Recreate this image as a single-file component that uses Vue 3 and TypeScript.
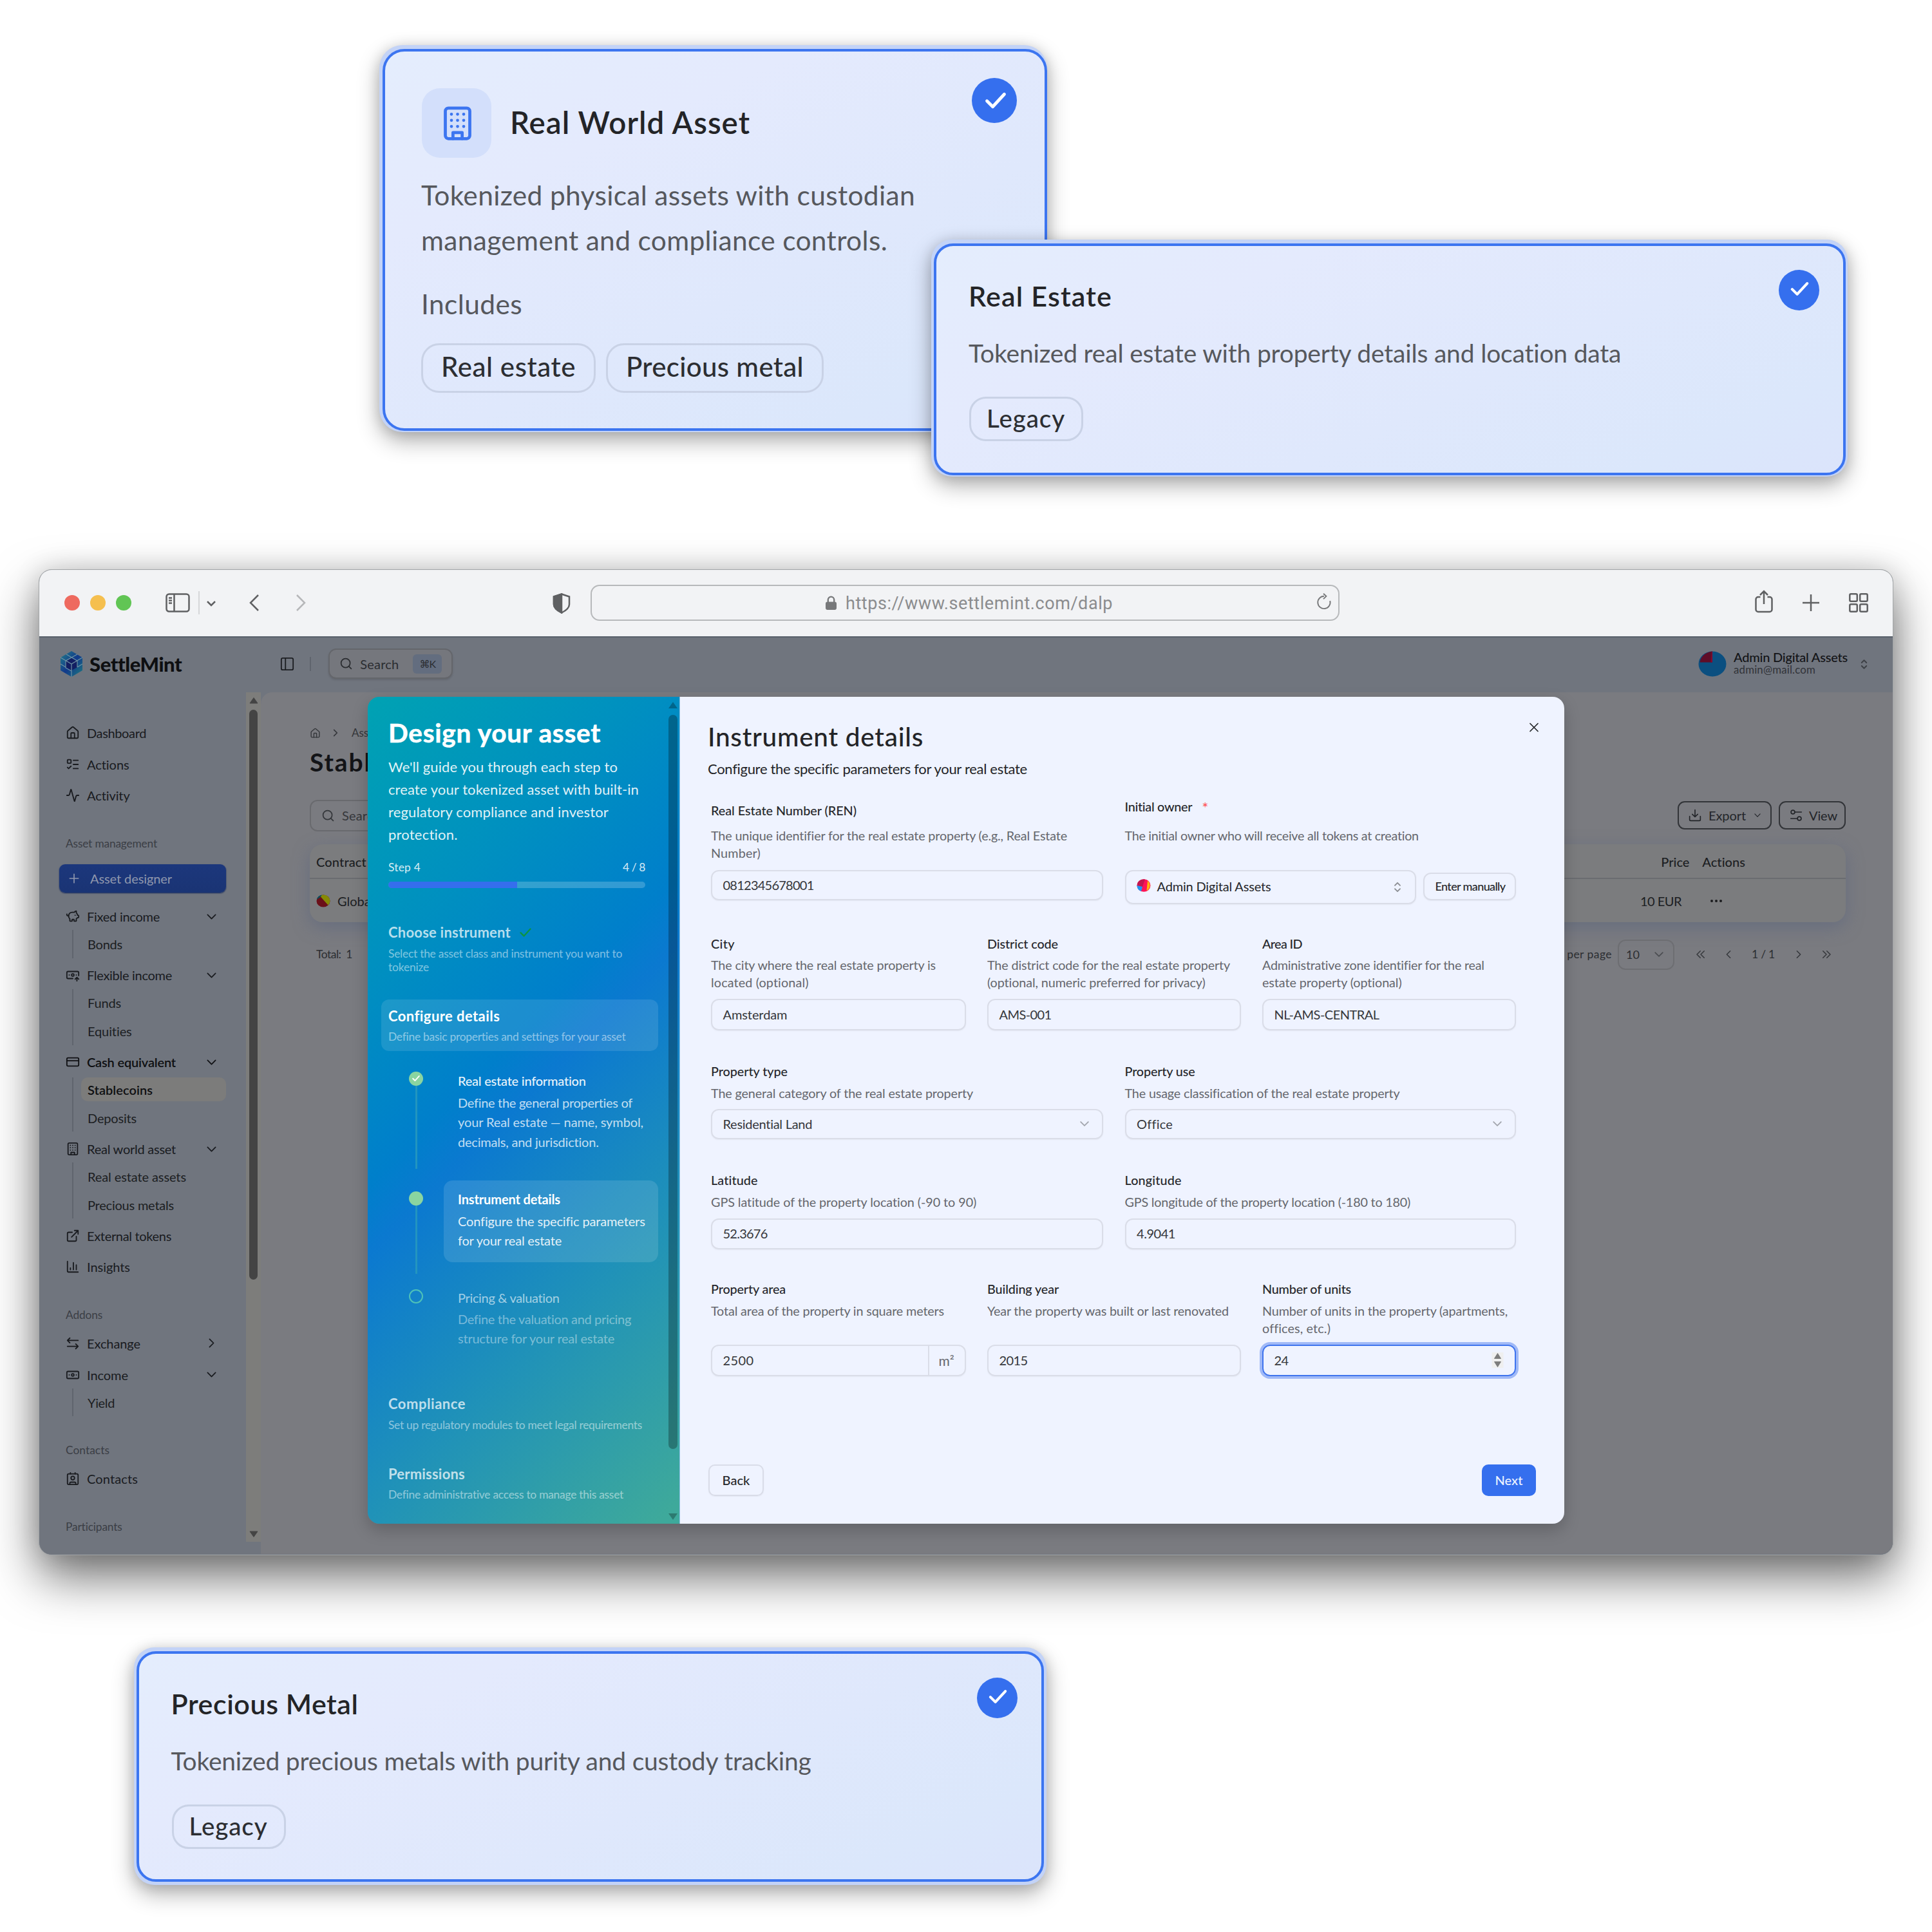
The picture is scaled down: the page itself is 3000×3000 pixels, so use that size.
<script setup lang="ts">
import type { Directive } from 'vue'

/* Tracks a line of text so that it fills the given width. */
const vFit: Directive<HTMLElement, number | undefined> = {
  mounted(el, { value }) {
    if (!value) return
    const n = (el.textContent ?? '').length
    const w = el.getBoundingClientRect().width
    el.style.letterSpacing = `${((value + 2 - w) / n).toFixed(3)}px`
  },
}

const icons: Record<string, string> = {
  home: '<path d="M15 21v-8a1 1 0 0 0-1-1h-4a1 1 0 0 0-1 1v8"/><path d="M3 10a2 2 0 0 1 .709-1.528l7-6a2 2 0 0 1 2.582 0l7 6A2 2 0 0 1 21 10v9a2 2 0 0 1-2 2H5a2 2 0 0 1-2-2z"/>',
  todo: '<rect x="3" y="4" width="6" height="6" rx="1"/><path d="m3 17 2 2 4-4M13 5h8M13 12h8M13 19h8"/>',
  activity: '<path d="M22 12h-2.480a2 2 0 0 0-1.930 1.460l-2.350 8.360a.25.25 0 0 1-.48 0L9.240 2.180a.25.25 0 0 0-.48 0l-2.350 8.360A2 2 0 0 1 4.490 12H2"/>',
  piggy: '<path d="M11 17h3v2a1 1 0 0 0 1 1h2a1 1 0 0 0 1-1v-3a3.160 3.160 0 0 0 2-2h1a1 1 0 0 0 1-1v-2a1 1 0 0 0-1-1h-1a5 5 0 0 0-2-4V3a4 4 0 0 0-3.200 1.600l-.3.4H11a6 6 0 0 0-6 6v1a5 5 0 0 0 2 4v3a1 1 0 0 0 1 1h2a1 1 0 0 0 1-1z"/><path d="M16 10h.01M2 8v1a2 2 0 0 0 2 2h1"/>',
  noteUp: '<path d="M12 18H4a2 2 0 0 1-2-2V8a2 2 0 0 1 2-2h16a2 2 0 0 1 2 2v5M18 12h.01M19 22v-6M22 19l-3-3-3 3M6 12h.01"/><circle cx="12" cy="12" r="2"/>',
  card: '<rect x="2" y="5" width="20" height="14" rx="2"/><path d="M2 10h20"/>',
  building: '<rect x="4" y="2" width="16" height="20" rx="2"/><path d="M9 22v-4h6v4M8 6h.01M16 6h.01M12 6h.01M12 10h.01M12 14h.01M16 10h.01M16 14h.01M8 10h.01M8 14h.01"/>',
  external: '<path d="M15 3h6v6M10 14 21 3M18 13v6a2 2 0 0 1-2 2H5a2 2 0 0 1-2-2V8a2 2 0 0 1 2-2h6"/>',
  chart: '<path d="M3 3v16a2 2 0 0 0 2 2h16M18 17V9M13 17V5M8 17v-3"/>',
  swap: '<path d="M7 3 3 7l4 4M3 7h18M17 21l4-4-4-4M21 17H3"/>',
  note: '<rect x="2" y="6" width="20" height="12" rx="2"/><circle cx="12" cy="12" r="2"/><path d="M6 12h.01M18 12h.01"/>',
  contact: '<path d="M16 2v2M7 22v-2a2 2 0 0 1 2-2h6a2 2 0 0 1 2 2v2M8 2v2"/><circle cx="12" cy="11" r="3"/><rect x="3" y="4" width="18" height="18" rx="2"/>',
  down: '<path d="m5 8.500 7 7 7-7"/>',
  right: '<path d="m8.500 5 7 7-7 7"/>',
  left: '<path d="m15.500 5-7 7 7 7"/>',
  dright: '<path d="m5 5 7 7-7 7M13 5l7 7-7 7"/>',
  dleft: '<path d="m19 5-7 7 7 7M11 5l-7 7 7 7"/>',
  updown: '<path d="m6 16 6 6 6-6M6 8l6-6 6 6"/>',
  search: '<circle cx="11" cy="11" r="8"/><path d="m21 21-4.300-4.300"/>',
  panel: '<rect x="2" y="2" width="20" height="20" rx="2.500"/><path d="M9 2v20"/>',
  plus: '<path d="M4 12h16M12 4v16"/>',
  download: '<path d="M12 2v13M7 10l5 5 5-5M2 14v6a2 2 0 0 0 2 2h16a2 2 0 0 0 2-2v-6"/>',
  sliders: '<circle cx="6" cy="6" r="3.500"/><circle cx="18" cy="18" r="3.500"/><path d="M10 6h12M2 18h12"/>',
  close: '<path d="M3 3l18 18M21 3 3 21"/>',
  check: '<path d="m3 12.500 6 6L21 5.500"/>',
}

interface Sub { text: string; w: number; on?: boolean }
interface Item { icon: string; text: string; w: number; bold?: boolean; chev?: string; subs?: Sub[] }
interface Group { title?: string; w?: number; designer?: boolean; items: Item[] }

const groups: Group[] = [
  {
    items: [
      { icon: 'home', text: 'Dashboard', w: 90 },
      { icon: 'todo', text: 'Actions', w: 64 },
      { icon: 'activity', text: 'Activity', w: 65 },
    ],
  },
  {
    title: 'Asset management', w: 140, designer: true,
    items: [
      { icon: 'piggy', text: 'Fixed income', w: 111, chev: 'down', subs: [{ text: 'Bonds', w: 52 }] },
      { icon: 'noteUp', text: 'Flexible income', w: 130, chev: 'down', subs: [{ text: 'Funds', w: 50 }, { text: 'Equities', w: 67 }] },
      { icon: 'card', text: 'Cash equivalent', w: 136, bold: true, chev: 'down', subs: [{ text: 'Stablecoins', w: 99, on: true }, { text: 'Deposits', w: 74 }] },
      { icon: 'building', text: 'Real world asset', w: 136, chev: 'down', subs: [{ text: 'Real estate assets', w: 151 }, { text: 'Precious metals', w: 132 }] },
      { icon: 'external', text: 'External tokens', w: 129 },
      { icon: 'chart', text: 'Insights', w: 65 },
    ],
  },
  {
    title: 'Addons', w: 55,
    items: [
      { icon: 'swap', text: 'Exchange', w: 81, chev: 'right' },
      { icon: 'note', text: 'Income', w: 62, chev: 'down', subs: [{ text: 'Yield', w: 40 }] },
    ],
  },
  { title: 'Contacts', w: 66, items: [{ icon: 'contact', text: 'Contacts', w: 77 }] },
  { title: 'Participants', w: 86, items: [] },
]

type Line = [string, number]
interface Field {
  label: Line; desc: Line[]; value: Line
  kind?: 'select' | 'owner' | 'area' | 'number'
}
const rows: { cls: string; fields: Field[] }[] = [
  {
    cls: 'two r1',
    fields: [
      { label: ['Real Estate Number (REN)', 224], desc: [['The unique identifier for the real estate property (e.g., Real Estate', 551], ['Number)', 75]], value: ['0812345678001', 139] },
      { label: ['Initial owner', 103], desc: [['The initial owner who will receive all tokens at creation', 455]], value: ['Admin Digital Assets', 175], kind: 'owner' },
    ],
  },
  {
    cls: 'three r2',
    fields: [
      { label: ['City', 35], desc: [['The city where the real estate property is', 347], ['located (optional)', 150]], value: ['Amsterdam', 98] },
      { label: ['District code', 108], desc: [['The district code for the real estate property', 375], ['(optional, numeric preferred for privacy)', 337]], value: ['AMS-001', 79] },
      { label: ['Area ID', 60], desc: [['Administrative zone identifier for the real', 343], ['estate property (optional)', 215]], value: ['NL-AMS-CENTRAL', 161] },
    ],
  },
  {
    cls: 'two r3',
    fields: [
      { label: ['Property type', 117], desc: [['The general category of the real estate property', 405]], value: ['Residential Land', 137], kind: 'select' },
      { label: ['Property use', 107], desc: [['The usage classification of the real estate property', 425]], value: ['Office', 53], kind: 'select' },
    ],
  },
  {
    cls: 'two r4',
    fields: [
      { label: ['Latitude', 71], desc: [['GPS latitude of the property location (-90 to 90)', 411]], value: ['52.3676', 67] },
      { label: ['Longitude', 86], desc: [['GPS longitude of the property location (-180 to 180)', 442]], value: ['4.9041', 58] },
    ],
  },
  {
    cls: 'three r5',
    fields: [
      { label: ['Property area', 114], desc: [['Total area of the property in square meters', 360]], value: ['2500', 46], kind: 'area' },
      { label: ['Building year', 109], desc: [['Year the property was built or last renovated', 373]], value: ['2015', 42] },
      { label: ['Number of units', 136], desc: [['Number of units in the property (apartments,', 379], ['offices, etc.)', 103]], value: ['24', 20], kind: 'number' },
    ],
  },
]

const steps: { state: string; title: Line; desc: Line[] }[] = [
  { state: 'done', title: ['Real estate information', 197], desc: [['Define the general properties of', 269], ['your Real estate — name, symbol,', 286], ['decimals, and jurisdiction.', 217]] },
  { state: 'now', title: ['Instrument details', 157], desc: [['Configure the specific parameters', 288], ['for your real estate', 159]] },
  { state: 'next', title: ['Pricing & valuation', 156], desc: [['Define the valuation and pricing', 267], ['structure for your real estate', 241]] },
]
</script>

<template>
  <div class="canvas">
    <!-- asset class card -->
    <div class="halo rwa">
      <div class="card">
        <div class="head">
          <div class="tile"><svg viewBox="0 0 24 24" class="ic" v-html="icons.building" /></div>
          <span v-fit="371" class="t h1">Real World Asset</span>
        </div>
        <span class="badge"><svg viewBox="0 0 24 24" class="ic" v-html="icons.check" /></span>
        <div class="para">
          <span v-fit="765" class="t">Tokenized physical assets with custodian</span>
          <span v-fit="722" class="t">management and compliance controls.</span>
        </div>
        <span v-fit="155" class="t inc">Includes</span>
        <div class="tags">
          <span class="tag"><span v-fit="207" class="t">Real estate</span></span>
          <span class="tag"><span v-fit="274" class="t">Precious metal</span></span>
        </div>
      </div>
    </div>

    <!-- browser window -->
    <div class="window">
      <div class="chrome">
        <i class="light red" /><i class="light yellow" /><i class="light green" />
        <svg class="c-side" viewBox="0 0 38 30"><rect x="1.500" y="1.500" width="35" height="27" rx="4" /><path d="M13.500 1.500v27M5 7.500h5M5 11.500h5M5 15.500h5" /></svg>
        <i class="c-div" />
        <svg class="c-chev" viewBox="0 0 16 10"><path d="M2 2l6 6 6-6" /></svg>
        <svg class="c-back" viewBox="0 0 17 28"><path d="M15 2 3 14l12 12" /></svg>
        <svg class="c-fwd" viewBox="0 0 17 28"><path d="m2 2 12 12L2 26" /></svg>
        <svg class="c-shield" viewBox="0 0 28 32"><path d="M14 1.500 26 5.500v12c0 6-6 10-12 13C8 27.500 2 23.500 2 17.500v-12z" /><path class="fill" d="M14 1.500 2 5.500v12c0 6 6 10 12 13z" /></svg>
        <div class="url">
          <svg class="lock" viewBox="0 0 18 24"><rect x="0" y="10" width="18" height="13" rx="3" /><path d="M4 11V6.500a5 5 0 0 1 10 0V11" /></svg>
          <span v-fit="413" class="t">https://www.settlemint.com/dalp</span>
          <svg class="reload" viewBox="0 0 24 28"><path d="M12 5a10 10 0 1 0 9.600 7.500M11 .800 15.500 5 11 9.500" /></svg>
        </div>
        <svg class="c-share" viewBox="0 0 28 36"><path d="M8.500 11H5a3.500 3.500 0 0 0-3.500 3.500v16A3.500 3.500 0 0 0 5 34h18a3.500 3.500 0 0 0 3.500-3.500v-16A3.500 3.500 0 0 0 23 11h-3.500M14 22V2M8 8l6-6 6 6" /></svg>
        <svg class="c-plus" viewBox="0 0 26 26"><path d="M13 0v26M0 13h26" /></svg>
        <svg class="c-grid" viewBox="0 0 30 30"><rect x="1.300" y="1.300" width="11.500" height="11.500" rx="2" /><rect x="17.200" y="1.300" width="11.500" height="11.500" rx="2" /><rect x="1.300" y="17.200" width="11.500" height="11.500" rx="2" /><rect x="17.200" y="17.200" width="11.500" height="11.500" rx="2" /></svg>
      </div>

      <div class="app">
        <div class="topbar">
          <svg class="logo" viewBox="0 0 36 42">
            <defs><linearGradient id="lg" x1="0" y1="0" x2="1" y2="1"><stop offset="0" stop-color="#23808a" /><stop offset=".5" stop-color="#12398a" /><stop offset="1" stop-color="#1d7c80" /></linearGradient></defs>
            <path d="M18 1 35 11v20L18 41 1 31V11z" fill="url(#lg)" />
            <path d="M18 12 27 17v9l-9 5-9-5v-9z" fill="#131f63" />
            <path d="M1 11l17 10L35 11M18 21v20M10 6l17 10v10M9 16v11l9 5M27 6 9 16M1 21l8 5M35 21l-8 5" fill="none" stroke="#6f93a3" stroke-width="1.200" />
          </svg>
          <span v-fit="140" class="t brand">SettleMint</span>
          <svg viewBox="0 0 24 24" class="ic tb-panel" v-html="icons.panel" />
          <i class="tb-sep" />
          <div class="tb-search">
            <svg viewBox="0 0 24 24" class="ic s19" v-html="icons.search" />
            <span v-fit="58" class="t">Search</span>
            <span class="kbd">⌘K</span>
          </div>
          <div class="user">
            <svg class="avatar" viewBox="0 0 44 42"><ellipse cx="22" cy="21" rx="21.500" ry="19.500" fill="#0b4f80" /><path d="M22 1.500A21.500 19.500 0 0 0 2.500 18.500H22z" fill="#5f0d28" /><path d="M22 1.500v17h-2.500l1.500-17z" fill="#85092f" /></svg>
            <div>
              <span v-fit="175" class="t name">Admin Digital Assets</span>
              <span v-fit="125" class="t mail">admin@mail.com</span>
            </div>
            <svg viewBox="0 0 24 24" class="ic ud" v-html="icons.updown" />
          </div>
        </div>

        <div class="body">
          <nav class="side">
            <template v-for="(g, gi) in groups" :key="gi">
              <div v-if="g.title" class="sec"><span v-fit="g.w" class="t">{{ g.title }}</span></div>
              <div v-if="g.designer" class="designer">
                <svg viewBox="0 0 24 24" class="ic" v-html="icons.plus" />
                <span v-fit="125" class="t">Asset designer</span>
              </div>
              <div class="items">
                <div v-for="it in g.items" :key="it.text" class="entry">
                  <div class="item" :class="{ bold: it.bold }">
                    <svg viewBox="0 0 24 24" class="ic lead" v-html="icons[it.icon]" />
                    <span v-fit="it.w" class="t">{{ it.text }}</span>
                    <svg v-if="it.chev" viewBox="0 0 24 24" class="ic chev" v-html="icons[it.chev]" />
                  </div>
                  <div v-if="it.subs" class="subs">
                    <div v-for="s in it.subs" :key="s.text" class="sub" :class="{ on: s.on }">
                      <span v-fit="s.w" class="t">{{ s.text }}</span>
                    </div>
                  </div>
                </div>
              </div>
            </template>
          </nav>
          <div class="track">
            <svg class="arr" viewBox="0 0 14 11"><path d="M7 1.500 13 10H1z" /></svg>
            <i class="thumb" />
            <svg class="arr last" viewBox="0 0 14 11"><path d="M7 9.500 13 1H1z" /></svg>
          </div>

          <main class="content">
            <div class="crumbs">
              <svg viewBox="0 0 24 24" class="ic c1" v-html="icons.home" />
              <svg viewBox="0 0 24 24" class="ic c2" v-html="icons.right" />
              <span class="t">Asset</span>
            </div>
            <h1 v-fit="216" class="t title">Stablecoins</h1>
            <div class="tools">
              <div class="find"><svg viewBox="0 0 24 24" class="ic s19" v-html="icons.search" /><span v-fit="58" class="t">Search</span></div>
              <div class="obtn exp">
                <svg viewBox="0 0 24 24" class="ic s18" v-html="icons.download" />
                <span v-fit="56" class="t">Export</span>
                <svg viewBox="0 0 24 24" class="ic s12" v-html="icons.down" />
              </div>
              <div class="obtn view">
                <svg viewBox="0 0 24 24" class="ic s18" v-html="icons.sliders" />
                <span v-fit="42" class="t">View</span>
              </div>
            </div>
            <div class="table">
              <div class="tr th">
                <span v-fit="76" class="t">Contract</span>
                <span v-fit="42" class="t price">Price</span>
                <span v-fit="65" class="t act">Actions</span>
              </div>
              <div class="tr">
                <svg class="coin" viewBox="0 0 22 20"><ellipse cx="11" cy="10" rx="10.500" ry="9.500" fill="#6b1018" /><path d="M6 2.500 18.500 16.500A10.500 9.500 0 0 0 8 .800z" fill="#868a05" /><path d="M9 .600A10.500 9.500 0 0 0 .700 8L7 3.500z" fill="#0c4f5c" /></svg>
                <span class="t">Global</span>
                <span v-fit="62" class="t price eur">10 EUR</span>
                <span class="dots"><i /><i /><i /></span>
              </div>
            </div>
            <div class="pager">
              <span v-fit="54" class="t">Total:&nbsp; 1</span>
              <span v-fit="116" class="t rpp">Rows per page</span>
              <div class="psel"><span class="t">10</span><svg viewBox="0 0 24 24" class="ic" v-html="icons.down" /></div>
              <svg viewBox="0 0 24 24" class="ic p1" v-html="icons.dleft" />
              <svg viewBox="0 0 24 24" class="ic p2" v-html="icons.left" />
              <span v-fit="34" class="t p3">1 / 1</span>
              <svg viewBox="0 0 24 24" class="ic p4" v-html="icons.right" />
              <svg viewBox="0 0 24 24" class="ic p5" v-html="icons.dright" />
            </div>
          </main>
        </div>
      </div>

      <!-- wizard dialog -->
      <div class="modal">
        <aside class="wiz">
          <div class="wcol">
            <span v-fit="328" class="t wtitle">Design your asset</span>
            <div class="wpara">
              <span v-fit="354" class="t">We'll guide you through each step to</span>
              <span v-fit="387" class="t">create your tokenized asset with built-in</span>
              <span v-fit="340" class="t">regulatory compliance and investor</span>
              <span v-fit="106" class="t">protection.</span>
            </div>
            <div class="wstep"><span v-fit="48" class="t">Step 4</span><span v-fit="33" class="t">4 / 8</span></div>
            <div class="bar"><i :style="{ width: (4 / 8) * 100 + '%' }" /></div>

            <div class="choose">
              <div class="ctitle"><span v-fit="188" class="t wh">Choose instrument</span><svg viewBox="0 0 24 24" class="ic ok" v-html="icons.check" /></div>
              <span v-fit="361" class="t ws">Select the asset class and instrument you want to</span>
              <span v-fit="61" class="t ws">tokenize</span>
            </div>
            <div class="conf">
              <span v-fit="171" class="t wh lit">Configure details</span>
              <span v-fit="366" class="t ws">Define basic properties and settings for your asset</span>
            </div>
            <div class="steps">
              <div v-for="s in steps" :key="s.state" class="step" :class="s.state">
                <div class="rail">
                  <span class="dot"><svg v-if="s.state === 'done'" viewBox="0 0 24 24" class="ic" v-html="icons.check" /></span>
                  <i v-if="s.state !== 'next'" class="ln" />
                </div>
                <div class="scard">
                  <span v-fit="s.title[1]" class="t st">{{ s.title[0] }}</span>
                  <div class="sd"><span v-for="d in s.desc" :key="d[0]" v-fit="d[1]" class="t">{{ d[0] }}</span></div>
                </div>
              </div>
            </div>
            <div class="later">
              <span v-fit="118" class="t wh">Compliance</span>
              <span v-fit="392" class="t ws">Set up regulatory modules to meet legal requirements</span>
            </div>
            <div class="later two">
              <span v-fit="117" class="t wh">Permissions</span>
              <span v-fit="363" class="t ws">Define administrative access to manage this asset</span>
            </div>
          </div>
          <div class="wtrack">
            <svg viewBox="0 0 14 10"><path d="M7 0 14 10H0z" /></svg>
            <i />
            <svg class="last" viewBox="0 0 14 10"><path d="M7 10 14 0H0z" /></svg>
          </div>
        </aside>

        <section class="form">
          <svg viewBox="0 0 24 24" class="ic x" v-html="icons.close" />
          <span v-fit="333" class="t ftitle">Instrument details</span>
          <span v-fit="493" class="t fsub">Configure the specific parameters for your real estate</span>
          <div v-for="r in rows" :key="r.cls" class="row" :class="r.cls">
            <div v-for="f in r.fields" :key="f.label[0]" class="field">
              <div class="lab"><span v-fit="f.label[1]" class="t">{{ f.label[0] }}</span><b v-if="f.kind === 'owner'">*</b></div>
              <div class="desc"><span v-for="d in f.desc" :key="d[0]" v-fit="d[1]" class="t">{{ d[0] }}</span></div>
              <div v-if="f.kind === 'owner'" class="pair">
                <div class="input owner">
                  <svg class="pie" viewBox="0 0 22 20"><ellipse cx="11" cy="10" rx="10.500" ry="9.800" fill="#ff1358" /><path d="M11 .200A10.500 9.800 0 0 0 .500 10L9 12 13 .500z" fill="#c4164f" /><path d="M.500 10A10.500 9.800 0 0 0 7 19L9 12z" fill="#2196f3" /><path d="M15.500 17.500 17 2.500A10.500 9.800 0 0 1 16 18z" fill="#ffb30f" /></svg>
                  <span v-fit="f.value[1]" class="t">{{ f.value[0] }}</span>
                  <svg viewBox="0 0 24 24" class="ic ud2" v-html="icons.updown" />
                </div>
                <div class="input manual"><span v-fit="107" class="t">Enter manually</span></div>
              </div>
              <div v-else class="input" :class="f.kind">
                <span v-fit="f.value[1]" class="t">{{ f.value[0] }}</span>
                <svg v-if="f.kind === 'select'" viewBox="0 0 24 24" class="ic sel" v-html="icons.down" />
                <span v-if="f.kind === 'area'" class="unit">m²</span>
                <svg v-if="f.kind === 'number'" class="spin" viewBox="0 0 18 24"><rect width="18" height="24" fill="#efefef" /><path d="M9 1.500 14 9.500H4zM9 22.500 14 14.500H4z" fill="#7d7d7d" stroke="#7d7d7d" stroke-linejoin="round" /></svg>
              </div>
            </div>
          </div>
          <div class="foot">
            <div class="btn back"><span v-fit="41" class="t">Back</span></div>
            <div class="btn primary"><span v-fit="41" class="t">Next</span></div>
          </div>
        </section>
      </div>
    </div>

    <!-- template cards -->
    <div class="halo est">
      <div class="card small">
        <span v-fit="221" class="t h2">Real Estate</span>
        <span class="badge"><svg viewBox="0 0 24 24" class="ic" v-html="icons.check" /></span>
        <span v-fit="1012" class="t p">Tokenized real estate with property details and location data</span>
        <div class="tags"><span class="tag"><span v-fit="120" class="t">Legacy</span></span></div>
      </div>
    </div>
    <div class="halo met">
      <div class="card small">
        <span v-fit="289" class="t h2">Precious Metal</span>
        <span class="badge"><svg viewBox="0 0 24 24" class="ic" v-html="icons.check" /></span>
        <span v-fit="992" class="t p">Tokenized precious metals with purity and custody tracking</span>
        <div class="tags"><span class="tag"><span v-fit="120" class="t">Legacy</span></span></div>
      </div>
    </div>
  </div>
</template>

<style>
body { background: #fff; }
</style>

<style scoped>
* { box-sizing: border-box; }
.canvas {
  position: relative; width: 3000px; height: 3000px; overflow: hidden; background: #fff;
  font-family: Lato, "Noto Sans", sans-serif; font-size: 20px; color: #232427;
}
.t { display: block; width: max-content; white-space: pre; flex: none; }
.ic { display: block; flex: none; fill: none; stroke: currentColor; stroke-width: 2; stroke-linecap: round; stroke-linejoin: round; overflow: visible; }
.s19 { width: 21px; height: 21px; } .s18 { width: 20px; height: 20px; } .s12 { width: 14px; height: 14px; }

/* floating cards */
.halo { position: absolute; background: #c3d3f7; box-shadow: 0 14px 34px rgba(0,0,0,.3), 0 2px 20px rgba(0,0,0,.13); }
.rwa { left: 589px; top: 70px; width: 1037px; height: 601px; padding: 6px 0 2px 5px; border-radius: 36px; }
.est { left: 1446px; top: 372px; width: 1423px; height: 367.500px; padding: 6px 3px 2px 4px; border-radius: 32px; }
.met { left: 207.500px; top: 2558px; width: 1417px; height: 369px; padding: 6px 4px 5px 4px; border-radius: 32px; }
.card {
  position: relative; width: 100%; height: 100%; border: 4px solid #3c75f0; border-radius: 34px;
  background: linear-gradient(155deg, #e4edfd 0%, #e4eafd 28%, #dfe8fc 60%, #dbe7fb 85%, #dbe4fb 100%);
  padding: 57px 0 0 56px;
}
.head { display: flex; align-items: center; gap: 29px; height: 108px; margin-left: 1px; }
.tile { width: 108px; height: 108px; border-radius: 28px; background: #d3dffb; display: flex; align-items: center; justify-content: center; color: #3c75f0; }
.tile .ic { width: 57px; height: 57px; margin-left: 2px; }
.h1 { font-size: 47.500px; line-height: 60px; font-weight: 600; margin-top: -3px; }
.badge { position: absolute; right: 43px; top: 41px; width: 70px; height: 70px; border-radius: 50%; background: #356fee; display: flex; align-items: center; justify-content: center; color: #fff; }
.badge .ic { width: 38px; height: 36px; stroke-width: 3.200; margin-left: 4px; }
.para { margin-top: 23px; font-size: 42.500px; line-height: 69.700px; color: #56585d; }
.inc { margin-top: 35px; font-size: 42.500px; line-height: 60px; color: #56585d; }
.tags { display: flex; gap: 16px; margin-top: 31px; }
.tag { display: flex; align-items: center; height: 77px; padding: 0 28px 0 28px; border: 3px solid #c9d2e6; border-radius: 28px; font-size: 42px; line-height: 60px; font-weight: 500; color: #2c2e32; }
.tag .t { margin-top: -6px; }
.small { padding: 53px 0 0 50px; border-radius: 30px; }
.small .h2 { font-size: 43px; line-height: 50px; font-weight: 600; }
.small .p { margin-top: 40px; font-size: 39px; line-height: 46px; color: #56585d; }
.small .tags { margin-top: 45px; margin-left: 1px; }
.small .tag { height: 69px; padding: 0 25px 0 24px; font-size: 38.500px; border-radius: 26px; }
.small .tag .t { margin-top: -4px; }
.small .badge { width: 63px; height: 63px; right: 37px; top: 37px; }
.small .badge .ic { width: 33px; height: 31px; margin-top: -5px; margin-left: 2px; }

/* browser */
.window { position: absolute; left: 60px; top: 884px; width: 2880px; height: 1531px; border-radius: 20px; border: 1.500px solid #a2a5a7; background: #70757e; box-shadow: 0 34px 76px rgba(0,0,0,.56), 0 0 40px rgba(0,0,0,.14); }
.chrome { display: flex; align-items: center; height: 103px; padding: 0 0 2px 39px; background: #f2f3f5; border-radius: 19px 19px 0 0; color: #5f6062; }
.chrome svg { fill: none; stroke: #5f6062; stroke-width: 2.500; flex: none; display: block; }
.light { width: 24px; height: 24px; border-radius: 50%; margin-right: 16px; flex: none; }
.red { background: #ee6a5f; } .yellow { background: #f5bf4f; } .green { background: #61c554; }
.c-side { width: 38px; height: 30px; margin-left: 37px; }
.c-div { width: 2px; height: 36px; background: #d6d7d9; margin-left: 13px; }
.c-chev { width: 16px; height: 10px; margin-left: 10px; margin-top: 2px; }
.c-back { width: 17px; height: 28px; margin-left: 50px; }
.c-fwd { width: 17px; height: 28px; margin-left: 56px; opacity: .4; }
.chrome .c-shield { width: 28px; height: 32px; margin-left: 382px; margin-top: 2px; }
.chrome .fill { fill: #5f6062; }
.url { display: flex; align-items: center; width: 1163px; height: 56px; margin-left: 31px; border: 2px solid #b7b9bb; border-radius: 14px; padding: 3px 10px 0 363px; font-family: Roboto, sans-serif; font-size: 27px; color: #8b8c8e; }
.url .lock { width: 17px; height: 23px; margin-right: 14px; stroke: #77787a; margin-top: -2px; }
.url .lock rect { fill: #77787a; stroke: none; }
.url .reload { width: 24px; height: 27px; margin-left: auto; stroke: #77787a; stroke-width: 2; margin-top: -5px; overflow: visible; }
.c-share { width: 28px; height: 36px; margin-left: 645px; margin-top: -4px; }
.c-plus { width: 26px; height: 26px; margin-left: 46px; }
.c-grid { width: 30px; height: 30px; margin-left: 46px; }

.app { height: 1425px; border-top: 2px solid #59616b; border-radius: 0 0 19px 19px; overflow: hidden; display: flex; flex-direction: column; color: #1c1e22; font-size: 20px; line-height: 26px; }
.topbar { display: flex; align-items: center; height: 85px; padding: 0 0 4px 32px; flex: none; }
.logo { width: 36px; height: 42px; flex: none; }
.brand { margin-left: 10px; font-size: 31px; font-weight: 900; color: #0e0f11; }
.tb-panel { width: 22px; height: 22px; margin-left: 153px; color: #1c1e22; }
.tb-sep { width: 2px; height: 22px; background: #5f646d; margin: 0 27px 0 24px; }
.tb-search { display: flex; align-items: center; width: 193px; height: 47px; border: 2px solid #64666b; border-radius: 12px; background: #75777d; padding-left: 15px; color: #2b2d31; box-shadow: 0 2px 3px rgba(0,0,0,.12); }
.tb-search .t { margin-left: 11px; }
.kbd { margin-left: 22px; width: 45px; height: 30px; border-radius: 6px; background: #636d7f; font-size: 16px; line-height: 29px; text-align: center; font-family: Lato, "DejaVu Sans", sans-serif; letter-spacing: -1px; }
.user { display: flex; align-items: center; margin-left: auto; margin-right: 37px; }
.avatar { width: 44px; height: 42px; margin-right: 11px; display: block; }
.name { font-weight: 500; line-height: 22px; color: #131417; margin-top: -3px; }
.mail { font-size: 16.800px; line-height: 18px; color: #303338; }
.ud { width: 15px; height: 17px; margin-left: 18px; margin-top: 2px; color: #3d4046; stroke-width: 3; }

.body { display: flex; flex: 1; min-height: 0; }
.side { width: 321px; padding: 41px 31px 0 31px; overflow: hidden; flex: none; }
.entry + .entry { margin-top: 4.600px; }
.item { display: flex; align-items: center; height: 44px; padding-left: 10px; color: #191b1f; }
.lead { width: 22px; height: 22px; margin-right: 11px; }
.chev { width: 21px; height: 21px; margin-left: auto; margin-right: 12px; }
.bold { font-weight: 600; color: #101114; }
.bold .t { color: #0e0f11; }
.subs { margin: -.800px 0 0 20px; border-left: 2px solid #5f646d; padding-left: 12px; }
.sub { height: 43.500px; display: flex; align-items: center; padding-left: 10px; }
.sub.on { height: 37px; margin: 3px 0 3.500px; background: #7c7c7b; border-radius: 10px; font-weight: 600; color: #0e0f11; }
.sec { height: 24px; margin: 41px 0 0 10px; font-size: 17.300px; line-height: 24px; color: #3b3e45; }
.sec + .items { margin-top: 9.500px; }
.designer { display: flex; align-items: center; height: 44px; margin: 20px 0 15px; padding-left: 13px; border-radius: 9px; background: linear-gradient(#1c377c, #1a3474); color: #8f97ad; box-shadow: 0 1px 2px #16295c; }
.designer .ic { width: 20px; height: 20px; margin-right: 15px; }
.track { width: 23px; height: 1319px; background: #7d7d7b; flex: none; display: flex; flex-direction: column; align-items: center; }
.arr { width: 14px; height: 11px; margin-top: 7px; fill: #444; stroke: #444; stroke-linejoin: round; display: block; }
.thumb { width: 13px; height: 885px; margin-top: 9px; border-radius: 7px; background: #444; }
.arr.last { margin-top: auto; margin-bottom: 6px; }
.content { flex: 1; background: #7a7b80; border-radius: 18px 0 0 0; padding: 50px 73px 0 76px; }
.crumbs { display: flex; align-items: center; height: 26px; font-size: 17px; color: #35373b; }
.c1 { width: 17px; height: 17px; } .c2 { width: 16px; height: 16px; margin: 0 17px 0 15px; stroke-width: 2.500; }
.title { margin: 9px 0 0; font-size: 39px; line-height: 46px; font-weight: 700; color: #131417; }
.tools { display: flex; align-items: center; gap: 11px; height: 50px; margin-top: 35px; color: #232529; }
.find { display: flex; align-items: center; gap: 11px; width: 420px; height: 49px; padding-left: 16px; border: 2px solid #696a6e; border-radius: 12px; margin-right: auto; color: #35373b; }
.obtn { display: flex; align-items: center; height: 44px; border: 2px solid #323438; border-radius: 11px; padding-left: 15px; }
.exp { width: 146px; gap: 11px; } .view { width: 104px; gap: 10px; }
.table { margin-top: 20px; height: 121px; border-radius: 20px; background: #7b7c7e; box-shadow: 0 8px 26px rgba(88,98,125,.55); }
.tr { display: flex; align-items: center; height: 67px; padding: 0 0 0 10px; }
.th { height: 54px; padding-top: 2px; border-bottom: 2px solid #6a6c70; font-weight: 500; }
.price { margin-left: auto; } .act { margin: 0 156px 0 20px; }
.coin { width: 22px; height: 20px; margin-right: 11px; }
.eur { margin-right: 0; }
.dots { display: flex; gap: 3px; margin: 0 192px 0 45px; } .dots i { width: 4px; height: 4px; border-radius: 50%; background: #1a1b1e; }
.pager { display: flex; align-items: center; height: 48px; margin-top: 26px; padding-left: 10px; font-size: 17.500px; color: #2c2e32; }
.rpp { margin-left: auto; margin-right: 9px; }
.psel { display: flex; align-items: center; width: 88px; height: 47px; border: 2px solid #6d6e72; border-radius: 12px; padding: 0 12px 0 11px; font-size: 18px; justify-content: space-between; }
.psel .ic { width: 20px; height: 20px; color: #4b4d51; }
.p1, .p2, .p4, .p5 { width: 18px; height: 18px; color: #35373b; }
.p1 { margin-left: 32px; } .p2 { margin-left: 25px; } .p3 { margin-left: 27px; } .p4 { margin-left: 28px; } .p5 { margin: 0 21px 0 25px; }

/* dialog */
.modal { position: absolute; left: 510px; top: 196.500px; width: 1858px; height: 1284px; border-radius: 18px; overflow: hidden; display: flex; box-shadow: 0 10px 26px rgba(0,0,0,.2); }
.wiz { display: flex; width: 485px; flex: none; background: linear-gradient(135deg, #00a2b3 0%, #0090c0 24%, #007fcb 43%, #0b79d0 49%, #2092b8 72%, #3ea99b 98%); border-right: 1px solid #8ac0e4; }
.wcol { width: 467px; padding: 32px 0 0 32px; color: #fff; }
.wtitle { font-size: 40.500px; line-height: 48px; font-weight: 700; -webkit-text-stroke: .6px currentColor; }
.wpara { margin-top: 11px; font-size: 22px; line-height: 35px; color: rgba(255,255,255,.9); }
.wstep { display: flex; justify-content: space-between; width: 399px; margin-top: 24px; font-size: 17.400px; line-height: 20px; color: rgba(255,255,255,.85); }
.bar { width: 399px; height: 10px; margin-top: 12px; border-radius: 5px; background: rgba(255,255,255,.2); overflow: hidden; }
.bar i { display: block; height: 100%; background: #356eed; }
.choose { margin-top: 55px; height: 79px; }
.ctitle { display: flex; align-items: center; }
.ok { width: 22px; height: 20px; margin-left: 12px; stroke: #0d9440; stroke-width: 2.800; }
.wh { font-size: 22px; line-height: 28px; font-weight: 700; color: rgba(255,255,255,.72); }
.lit { color: #fff; }
.ws { font-size: 17.400px; line-height: 21px; color: rgba(255,255,255,.5); }
.choose .ctitle { margin-bottom: 8px; }
.conf { width: 430px; height: 80px; margin: 39px 0 0 -11px; padding: 12px 0 0 11px; border-radius: 12px; background: rgba(255,255,255,.11); }
.conf .ws { margin-top: 7px; }
.steps { margin-top: 32px; }
.step { display: flex; }
.rail { width: 86px; padding-left: 32px; flex: none; display: flex; flex-direction: column; }
.dot { width: 22px; height: 22px; border-radius: 50%; background: #8ad5a0; flex: none; display: flex; align-items: center; justify-content: center; }
.dot .ic { width: 14px; height: 13px; stroke-width: 3.500; }
.ln { width: 3px; margin-left: 9.500px; background: #2799bd; opacity: .85; }
.scard { width: 333px; padding-left: 22px; font-size: 20px; }
.st { line-height: 26px; padding-top: 1px; font-weight: 500; color: rgba(255,255,255,.93); }
.sd { margin-top: 6px; line-height: 30.700px; color: rgba(255,255,255,.75); }
.done { height: 169.500px; } .done .ln { height: 129px; }
.now { height: 168.500px; } .now .rail { padding-top: 17px; } .now .ln { height: 106px; }
.now .scard { height: 127px; padding-top: 15px; border-radius: 14px; background: rgba(255,255,255,.12); }
.now .st { font-weight: 700; color: #fff; } .now .sd { line-height: 30.300px; color: rgba(255,255,255,.88); }
.next .dot { background: none; border: 2px solid #4fc2b8; }
.next .st { padding-top: 0; font-weight: 400; color: rgba(255,255,255,.6); }
.next .sd { margin-top: 5px; color: rgba(255,255,255,.42); }
.next { height: 164.500px; }
.later { height: 58px; } .later .ws { margin-top: 7.500px; color: rgba(255,255,255,.5); }
.later.two { margin-top: 50.500px; }
.wtrack { width: 14px; display: flex; flex-direction: column; padding: 8px 0 6px; }
.wtrack svg { width: 14px; height: 10px; fill: rgba(0,0,0,.28); display: block; }
.wtrack i { width: 14px; height: 1140px; border-radius: 7px; background: rgba(0,0,0,.28); margin-top: 10px; }
.wtrack .last { margin-top: auto; }

.form { position: relative; flex: 1; background: #eff3ff; padding: 38px 0 0 44px; display: flex; flex-direction: column; }
.x { position: absolute; right: 39px; top: 39px; width: 16px; height: 17px; color: #232427; stroke-width: 2.600; }
.ftitle { margin-left: -1px; font-size: 40.500px; line-height: 48px; font-weight: 500; }
.fsub { margin: 12px 0 0 -1px; font-size: 22px; line-height: 28px; color: #232427; }
.row { display: grid; margin-left: 4px; }
.row.two { grid-template-columns: 609px 607px; column-gap: 33.500px; }
.row.three { grid-template-columns: 395.500px 393.500px 393.500px; column-gap: 33.500px; }
.lab { display: flex; height: 24px; line-height: 24px; font-size: 19.800px; font-weight: 500; color: #26272b; }
.lab b { margin-left: 15px; font-size: 24px; font-weight: 400; color: #ff5257; line-height: 27px; }
.desc { margin-top: 9px; height: 27px; line-height: 27px; font-size: 19.800px; color: #65676d; }
.input { display: flex; align-items: center; margin-top: 12px; height: 48px; border: 2px solid #dadde8; border-radius: 12px; padding-left: 16.500px; font-size: 20px; color: #35373b; box-shadow: 0 1px 2px rgba(0,0,0,.05); }
.input .t { margin-top: -1px; }
.r1 { margin-top: 32px; height: 164px; }
.r1 .lab { height: 30px; } .r1 .field:first-child .lab { padding-top: 6px; }
.r1 .desc { margin-top: 14px; height: 54px; } .r1 .input { margin-top: 13px; height: 47px; }
.r2 { margin-top: 49.500px; height: 147px; } .r2 .desc, .r5 .desc { height: 54px; } .r2 .desc { margin-top: 8px; } .r2 .input { height: 49px; }
.r3 { margin-top: 50.500px; height: 119px; } .r3 .input { height: 47px; margin-top: 11px; }
.r4 { margin-top: 50px; height: 120px; }
.r5 { margin-top: 49px; height: 148px; } .r5 .input { height: 49px; }
.pair { display: flex; gap: 11px; }
.r1 .owner { width: 452px; height: 53px; padding-left: 16px; color: #26272b; }
.owner .t { margin-top: -3px; }
.pie { width: 22px; height: 20px; margin-right: 10px; margin-top: -4px; }
.owner .ud2 { width: 16px; height: 17px; margin-left: auto; margin-right: 19px; color: #8b8d93; stroke-width: 2.800; }
.r1 .manual { width: 144px; height: 43px; margin-top: 17px; padding-left: 17px; font-size: 18px; font-weight: 500; color: #26272b; }
.sel { width: 20px; height: 20px; margin-left: auto; margin-right: 17px; color: #a3a6ae; stroke-width: 2.200; }
.unit { margin-left: auto; height: 100%; width: 57px; border-left: 2px solid #dadde8; display: flex; align-items: center; padding-left: 15px; color: #65676d; font-size: 21px; }
.number { border-color: #3f74ee; box-shadow: 0 0 0 4px #a0b9f7; }
.spin { width: 19px; height: 24px; margin-left: auto; margin-right: 17px; display: block; }
.foot { display: flex; justify-content: space-between; margin-top: 137px; padding-right: 44px; }
.btn { display: flex; align-items: center; justify-content: center; height: 49px; border-radius: 10px; font-size: 20px; font-weight: 500; }
.back { width: 86px; border: 2px solid #d9dce8; color: #26272b; box-shadow: 0 1px 2px rgba(0,0,0,.05); }
.primary { width: 84px; background: #356fee; color: #eef3ff; }
</style>
